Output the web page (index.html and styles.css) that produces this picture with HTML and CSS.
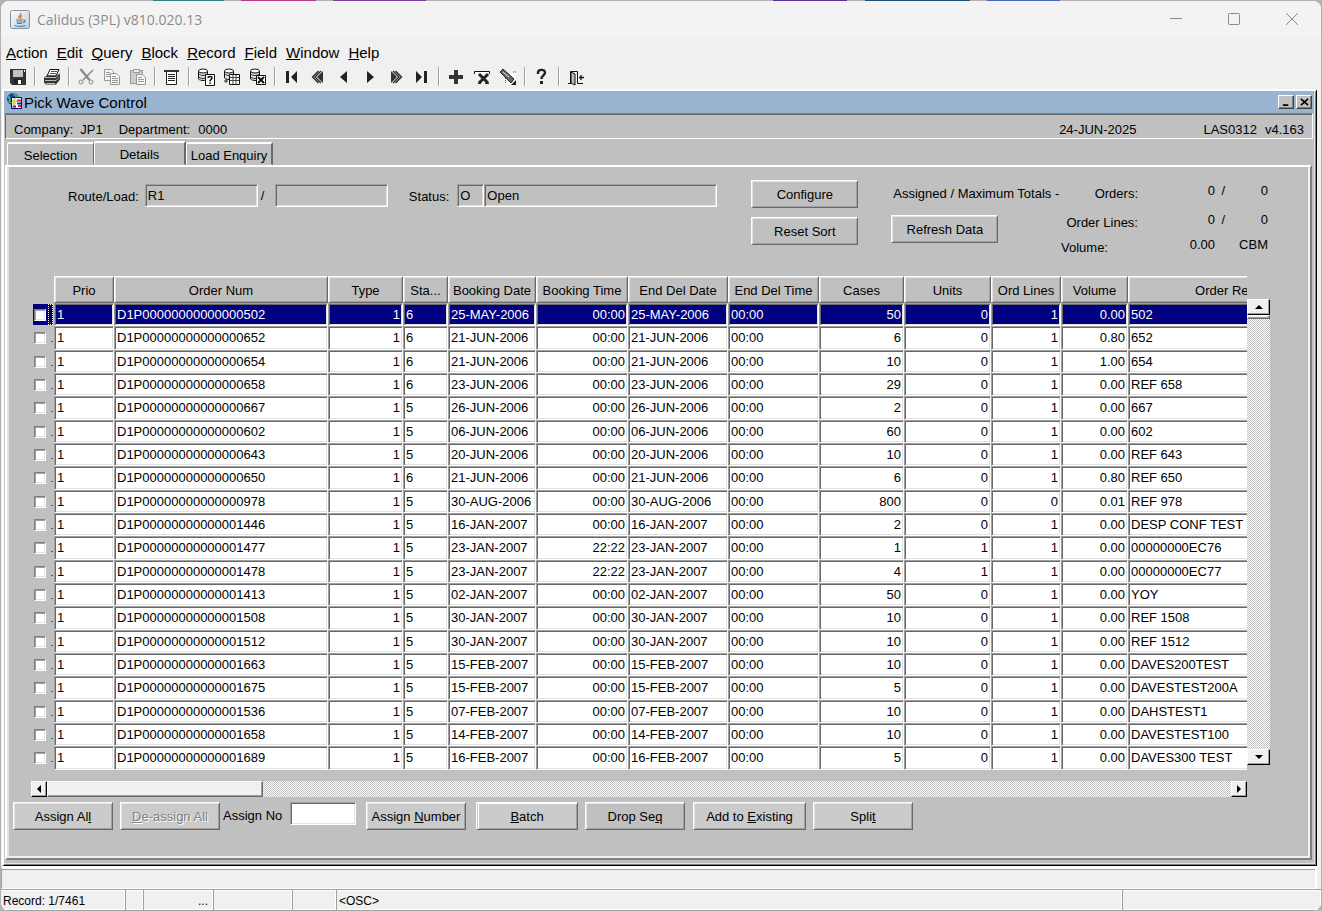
FILE: index.html
```
<!DOCTYPE html>
<html lang="en">
<head>
<meta charset="utf-8">
<title>Calidus (3PL) v810.020.13</title>
<link rel="stylesheet" href="styles.css">
</head>
<body>
<div class="app">
  <header class="titlebar">
    <svg class="java" viewBox="0 0 20 20"><defs><linearGradient id="g" x1="0" y1="0" x2="1" y2="1"><stop offset="0" stop-color="#fff"/><stop offset="1" stop-color="#b9cbd8"/></linearGradient></defs><rect x=".5" y=".5" width="19" height="18" rx="2" fill="url(#g)" stroke="#7f93a3"/><path d="M10.500 3c1.500 2-3 3-1.500 5.500M12 5.500c-2 1.200-2 2-1 3.500" fill="none" stroke="#e5803c" stroke-width="1.500"/><path d="M6 10h7M6.500 12h6M7 13.500h5M13.500 10c2.500 0 1.500 2.500-.5 2.500M4.500 15.500c3 1 8 1 11 0" fill="none" stroke="#4f7fa5" stroke-width="1.200"/></svg>
    <h1>Calidus (3PL) v810.020.13</h1>
    <div class="caption">
      <button aria-label="Minimize"><svg viewBox="0 0 12 12"><path d="M0 5.500h12"/></svg></button>
      <button aria-label="Maximize"><svg viewBox="0 0 12 12"><rect x=".5" y=".5" width="11" height="11" rx="1"/></svg></button>
      <button aria-label="Close"><svg viewBox="0 0 12 12"><path d="M0 0l12 12M12 0L0 12"/></svg></button>
    </div>
  </header>

  <nav class="menubar">
    <button><u>A</u>ction</button><button><u>E</u>dit</button><button><u>Q</u>uery</button><button><u>B</u>lock</button><button><u>R</u>ecord</button><button><u>F</u>ield</button><button><u>W</u>indow</button><button><u>H</u>elp</button>
  </nav>

  <div class="toolbar">
    <button aria-label="Save"><svg viewBox="0 0 18 18"><path d="M1 1h16v16H3l-2-2z" fill="#333"/><path d="M4 2h10v7H4z" fill="#c4c4c4"/><path d="M5 11h8v5H5z" fill="#222"/><path d="M9 12h3v4H9z" fill="#fff"/><path d="M15 2h1v2h-1z" fill="#fff"/></svg></button>
    <i></i>
    <button aria-label="Print"><svg viewBox="0 0 18 18"><path d="M7 1.500h9L13 8H4z" fill="#fff" stroke="#111"/><path d="M8 3.500h6M7 5.500h6" stroke="#555"/><path d="M4 7.500h9l4-2v6l-4 5H3l-2-2v-5z" fill="#333"/><path d="M2 9.500h11l3-3M2 12.500h11l3-3M3 15.500h9" fill="none" stroke="#bbb"/></svg></button>
    <i></i>
    <button aria-label="Cut"><svg viewBox="0 0 18 18" fill="none" stroke="#888"><path d="M3 1l9 11M4 1l9 11M16 2L6 12" stroke-width="1.500"/><circle cx="4" cy="14" r="2"/><circle cx="14" cy="14" r="2"/></svg></button>
    <button aria-label="Copy"><svg viewBox="0 0 18 18" fill="#f4f4f4" stroke="#999"><path d="M1.500 1.500h7l2 2v9h-9z"/><path d="M3 4.500h4M3 6.500h4M3 8.500h4"/><path d="M7.500 5.500h6l3 3v8h-9z"/><path d="M9 8.500h4M9 10.500h6M9 12.500h6M9 14.500h6"/></svg></button>
    <button aria-label="Paste"><svg viewBox="0 0 18 18" fill="#ccc" stroke="#999"><path d="M1.500 2.500h12v13h-12z"/><path d="M4.500 1.500h6v3h-6z" fill="#eee"/><path d="M7.500 6.500h6l3 3v7h-9z" fill="#f4f4f4"/><path d="M9 9.500h4M9 11.500h6M9 13.500h6"/></svg></button>
    <i></i>
    <button aria-label="List of values"><svg viewBox="0 0 18 18"><path d="M1 2h15v2H1z" fill="#333"/><path d="M3.500 4v12.500h10V4" fill="#fff" stroke="#222"/><path d="M5 6.500h7M5 8.500h7M5 10.500h7M5 12.500h7" stroke="#222"/></svg></button>
    <i></i>
    <button aria-label="Enter query"><svg viewBox="0 0 18 18"><path d="M1.500 3v8c2 2 7 2 9 0V3" fill="#ddd" stroke="#111"/><ellipse cx="6" cy="3" rx="4.500" ry="2" fill="#fff" stroke="#111"/><path d="M2 6c2 2 6 2 8 0M2 9c2 2 6 2 8 0" fill="none" stroke="#333"/><path d="M8.500 6.500h9v11h-9z" fill="#fff" stroke="#111"/><path d="M11 10c0-2 4-2 4 0 0 1.500-2 1.300-2 3.500M13 14.500v1.500" fill="none" stroke="#111" stroke-width="1.500"/></svg></button>
    <button aria-label="Execute query"><svg viewBox="0 0 18 18"><path d="M1.500 3v7c2 2 7 2 9 0V3" fill="#ddd" stroke="#111"/><ellipse cx="6" cy="3" rx="4.500" ry="2" fill="#fff" stroke="#111"/><path d="M2 6c2 2 6 2 8 0" fill="none" stroke="#333"/><path d="M6.500 6.500h10v10h-10z" fill="#fff" stroke="#111"/><path d="M7 9.500h9M7 12.500h9M10 7v9M13 7v9" stroke="#444"/><path d="M1 13h4M3 11v4" stroke="#333"/></svg></button>
    <button aria-label="Cancel query"><svg viewBox="0 0 18 18"><path d="M1.500 3v8c2 2 7 2 9 0V3" fill="#ddd" stroke="#111"/><ellipse cx="6" cy="3" rx="4.500" ry="2" fill="#fff" stroke="#111"/><path d="M2 6c2 2 6 2 8 0M2 9c2 2 6 2 8 0" fill="none" stroke="#333"/><path d="M7.500 7.500h9v9h-9z" fill="#fff" stroke="#111"/><path d="M9 9l6 6M15 9l-6 6" stroke="#111" stroke-width="2"/></svg></button>
    <i></i>
    <button aria-label="First record"><svg viewBox="0 0 18 18"><path d="M3 3h3v12H3zM14 3v12l-6-6z" fill="#222"/></svg></button>
    <button aria-label="Previous block"><svg viewBox="0 0 18 18"><path d="M14 3v12L8 9z" fill="#333"/><path d="M9.500 3l-6 6 6 6M12 3L6 9l6 6" fill="none" stroke="#222" stroke-width="1.300"/></svg></button>
    <button aria-label="Previous record"><svg viewBox="0 0 18 18"><path d="M12 3v12L5 9z" fill="#222"/></svg></button>
    <button aria-label="Next record"><svg viewBox="0 0 18 18"><path d="M6 3v12l7-6z" fill="#222"/></svg></button>
    <button aria-label="Next block"><svg viewBox="0 0 18 18"><path d="M4 3v12l6-6z" fill="#333"/><path d="M8.500 3l6 6-6 6M6 3l6 6-6 6" fill="none" stroke="#222" stroke-width="1.300"/></svg></button>
    <button aria-label="Last record"><svg viewBox="0 0 18 18"><path d="M3 3v12l6-6zM11 3h3v12h-3z" fill="#222"/></svg></button>
    <i></i>
    <button aria-label="Insert record"><svg viewBox="0 0 18 18"><path d="M2 9h14M9 2v14" stroke="#333" stroke-width="4"/></svg></button>
    <button aria-label="Remove record"><svg viewBox="0 0 18 18"><path d="M1.500 6V3.500h15V6" fill="#fff" stroke="#111"/><path d="M6 6l9 9M15 6l-9 9" stroke="#222" stroke-width="3"/><path d="M5 15.500h3M12 15.500h4" stroke="#222"/></svg></button>
    <button aria-label="Clear record"><svg viewBox="0 0 18 18"><path d="M6 5h11v11H6z" fill="#fff"/><path d="M6.500 8v8M14 4h3" stroke="#555" stroke-dasharray="1 1"/><path d="M1 4l3-3 11 10-3 4z" fill="#666" stroke="#222"/><path d="M4 4l6 5" stroke="#ddd"/><path d="M17 12v5h-5z" fill="#222"/></svg></button>
    <i></i>
    <button aria-label="Help"><svg viewBox="0 0 18 18"><path d="M5 6V4.500c0-3.500 7-3.500 7 0 0 3-3.500 3-3.500 6.500" fill="none" stroke="#222" stroke-width="2.400"/><path d="M7 13h3v3H7z" fill="#222"/></svg></button>
    <i></i>
    <button aria-label="Exit"><svg viewBox="0 0 18 18"><path d="M1 15.500h3M3.500 15V3.500h7v12H16" fill="none" stroke="#111"/><path d="M4 4l4 2v11l-4-2z" fill="#bbb" stroke="#111"/><path d="M12 9.500h5M14 7v5" stroke="#111" stroke-width="1.300"/></svg></button>
  </div>

  <main class="mdi">
    <div class="mdi-title">
      <svg viewBox="0 0 18 18"><circle cx="7" cy="6" r="6" fill="#12508c"/><path d="M2 3c3 3 2 5 1 7M8 0c0 3 4 3 5 4" stroke="#3fae8c" stroke-width="2" fill="none"/><path d="M5.500 4.500h10v11h-10z" fill="#fff" stroke="#000080"/><path d="M11 7.500h4" stroke="#d22" stroke-width="2"/><path d="M11 10.500h4M7 13.500h3" stroke="#22c" stroke-width="2"/><path d="M12 13h3" stroke="#d22" stroke-width="2"/><path d="M10 4l-5 6h3l-2 5 5-7H8z" fill="#fe0" stroke="#875" stroke-width=".4"/></svg>
      <h2>Pick Wave Control</h2>
      <button class="mdi-btn" aria-label="Minimize form"><svg viewBox="0 0 10 10"><path d="M1 8h6" stroke-width="2"/></svg></button>
      <button class="mdi-btn" aria-label="Close form"><svg viewBox="0 0 10 10"><path d="M1 1l8 7M9 1L1 8" stroke-width="1.800"/></svg></button>
    </div>
    <div class="info">
      <span>Company:</span><span class="company">JP1</span><span class="dept">Department:</span><span>0000</span>
      <span class="date">24-JUN-2025</span><span class="form-id">LAS0312</span><span>v4.163</span>
    </div>
    <div class="tabs" role="tablist">
      <button class="tab" role="tab">Selection</button><button class="tab on" role="tab" aria-selected="true">Details</button><button class="tab" role="tab">Load Enquiry</button>
    </div>

    <section class="pane">
      <div class="query">
        <div class="fields">
          <label for="route">Route/Load:</label>
          <input class="box route" id="route" value="R1" readonly>
          <label class="slash" for="load">/</label>
          <input class="box route" id="load" readonly>
          <label class="status" for="status">Status:</label>
          <input class="box code" id="status" value="O" readonly>
          <input class="box name" aria-label="Status name" value="Open" readonly>
        </div>
        <div class="stack">
          <button class="btn flat">Configure</button>
          <button class="btn flat">Reset Sort</button>
        </div>
        <div class="totals-head">
          <span>Assigned / Maximum Totals -</span>
          <button class="btn flat">Refresh Data</button>
        </div>
        <dl class="totals">
          <div><dt>Orders:</dt><dd class="a">0</dd><dd class="s">/</dd><dd class="m">0</dd></div>
          <div><dt>Order Lines:</dt><dd class="a">0</dd><dd class="s">/</dd><dd class="m">0</dd></div>
          <div class="vol"><dt>Volume:</dt><dd class="a">0.00</dd><dd class="s"></dd><dd class="m">CBM</dd></div>
        </dl>
      </div>

      <div class="grid">
        <div class="view">
          <table>
            <colgroup><col class="w-sel"><col class="w-prio"><col class="w-num"><col class="w-type"><col class="w-sta"><col class="w-bd"><col class="w-bt"><col class="w-ed"><col class="w-et"><col class="w-cases"><col class="w-units"><col class="w-lines"><col class="w-vol"><col class="w-ref"></colgroup>
            <thead><tr><td></td><th>Prio</th><th>Order Num</th><th>Type</th><th>Sta...</th><th>Booking Date</th><th>Booking Time</th><th>End Del Date</th><th>End Del Time</th><th>Cases</th><th>Units</th><th>Ord Lines</th><th>Volume</th><th>Order Reference</th></tr></thead>
            <tbody>
            <tr class="current"><td><input type="checkbox" aria-label="Select 502"><b></b></td><td>1</td><td>D1P00000000000000502</td><td>1</td><td>6</td><td>25-MAY-2006</td><td>00:00</td><td>25-MAY-2006</td><td>00:00</td><td>50</td><td>0</td><td>1</td><td>0.00</td><td>502</td></tr>
            <tr><td><input type="checkbox" aria-label="Select 652"><b></b></td><td>1</td><td>D1P00000000000000652</td><td>1</td><td>6</td><td>21-JUN-2006</td><td>00:00</td><td>21-JUN-2006</td><td>00:00</td><td>6</td><td>0</td><td>1</td><td>0.80</td><td>652</td></tr>
            <tr><td><input type="checkbox" aria-label="Select 654"><b></b></td><td>1</td><td>D1P00000000000000654</td><td>1</td><td>6</td><td>21-JUN-2006</td><td>00:00</td><td>21-JUN-2006</td><td>00:00</td><td>10</td><td>0</td><td>1</td><td>1.00</td><td>654</td></tr>
            <tr><td><input type="checkbox" aria-label="Select 658"><b></b></td><td>1</td><td>D1P00000000000000658</td><td>1</td><td>6</td><td>23-JUN-2006</td><td>00:00</td><td>23-JUN-2006</td><td>00:00</td><td>29</td><td>0</td><td>1</td><td>0.00</td><td>REF 658</td></tr>
            <tr><td><input type="checkbox" aria-label="Select 667"><b></b></td><td>1</td><td>D1P00000000000000667</td><td>1</td><td>5</td><td>26-JUN-2006</td><td>00:00</td><td>26-JUN-2006</td><td>00:00</td><td>2</td><td>0</td><td>1</td><td>0.00</td><td>667</td></tr>
            <tr><td><input type="checkbox" aria-label="Select 602"><b></b></td><td>1</td><td>D1P00000000000000602</td><td>1</td><td>5</td><td>06-JUN-2006</td><td>00:00</td><td>06-JUN-2006</td><td>00:00</td><td>60</td><td>0</td><td>1</td><td>0.00</td><td>602</td></tr>
            <tr><td><input type="checkbox" aria-label="Select 643"><b></b></td><td>1</td><td>D1P00000000000000643</td><td>1</td><td>5</td><td>20-JUN-2006</td><td>00:00</td><td>20-JUN-2006</td><td>00:00</td><td>10</td><td>0</td><td>1</td><td>0.00</td><td>REF 643</td></tr>
            <tr><td><input type="checkbox" aria-label="Select 650"><b></b></td><td>1</td><td>D1P00000000000000650</td><td>1</td><td>6</td><td>21-JUN-2006</td><td>00:00</td><td>21-JUN-2006</td><td>00:00</td><td>6</td><td>0</td><td>1</td><td>0.80</td><td>REF 650</td></tr>
            <tr><td><input type="checkbox" aria-label="Select 978"><b></b></td><td>1</td><td>D1P00000000000000978</td><td>1</td><td>5</td><td>30-AUG-2006</td><td>00:00</td><td>30-AUG-2006</td><td>00:00</td><td>800</td><td>0</td><td>0</td><td>0.01</td><td>REF 978</td></tr>
            <tr><td><input type="checkbox" aria-label="Select 1446"><b></b></td><td>1</td><td>D1P00000000000001446</td><td>1</td><td>5</td><td>16-JAN-2007</td><td>00:00</td><td>16-JAN-2007</td><td>00:00</td><td>2</td><td>0</td><td>1</td><td>0.00</td><td>DESP CONF TEST</td></tr>
            <tr><td><input type="checkbox" aria-label="Select 1477"><b></b></td><td>1</td><td>D1P00000000000001477</td><td>1</td><td>5</td><td>23-JAN-2007</td><td>22:22</td><td>23-JAN-2007</td><td>00:00</td><td>1</td><td>1</td><td>1</td><td>0.00</td><td>00000000EC76</td></tr>
            <tr><td><input type="checkbox" aria-label="Select 1478"><b></b></td><td>1</td><td>D1P00000000000001478</td><td>1</td><td>5</td><td>23-JAN-2007</td><td>22:22</td><td>23-JAN-2007</td><td>00:00</td><td>4</td><td>1</td><td>1</td><td>0.00</td><td>00000000EC77</td></tr>
            <tr><td><input type="checkbox" aria-label="Select 1413"><b></b></td><td>1</td><td>D1P00000000000001413</td><td>1</td><td>5</td><td>02-JAN-2007</td><td>00:00</td><td>02-JAN-2007</td><td>00:00</td><td>50</td><td>0</td><td>1</td><td>0.00</td><td>YOY</td></tr>
            <tr><td><input type="checkbox" aria-label="Select 1508"><b></b></td><td>1</td><td>D1P00000000000001508</td><td>1</td><td>5</td><td>30-JAN-2007</td><td>00:00</td><td>30-JAN-2007</td><td>00:00</td><td>10</td><td>0</td><td>1</td><td>0.00</td><td>REF 1508</td></tr>
            <tr><td><input type="checkbox" aria-label="Select 1512"><b></b></td><td>1</td><td>D1P00000000000001512</td><td>1</td><td>5</td><td>30-JAN-2007</td><td>00:00</td><td>30-JAN-2007</td><td>00:00</td><td>10</td><td>0</td><td>1</td><td>0.00</td><td>REF 1512</td></tr>
            <tr><td><input type="checkbox" aria-label="Select 1663"><b></b></td><td>1</td><td>D1P00000000000001663</td><td>1</td><td>5</td><td>15-FEB-2007</td><td>00:00</td><td>15-FEB-2007</td><td>00:00</td><td>10</td><td>0</td><td>1</td><td>0.00</td><td>DAVES200TEST</td></tr>
            <tr><td><input type="checkbox" aria-label="Select 1675"><b></b></td><td>1</td><td>D1P00000000000001675</td><td>1</td><td>5</td><td>15-FEB-2007</td><td>00:00</td><td>15-FEB-2007</td><td>00:00</td><td>5</td><td>0</td><td>1</td><td>0.00</td><td>DAVESTEST200A</td></tr>
            <tr><td><input type="checkbox" aria-label="Select 1536"><b></b></td><td>1</td><td>D1P00000000000001536</td><td>1</td><td>5</td><td>07-FEB-2007</td><td>00:00</td><td>07-FEB-2007</td><td>00:00</td><td>10</td><td>0</td><td>1</td><td>0.00</td><td>DAHSTEST1</td></tr>
            <tr><td><input type="checkbox" aria-label="Select 1658"><b></b></td><td>1</td><td>D1P00000000000001658</td><td>1</td><td>5</td><td>14-FEB-2007</td><td>00:00</td><td>14-FEB-2007</td><td>00:00</td><td>10</td><td>0</td><td>1</td><td>0.00</td><td>DAVESTEST100</td></tr>
            <tr><td><input type="checkbox" aria-label="Select 1689"><b></b></td><td>1</td><td>D1P00000000000001689</td><td>1</td><td>5</td><td>16-FEB-2007</td><td>00:00</td><td>16-FEB-2007</td><td>00:00</td><td>5</td><td>0</td><td>1</td><td>0.00</td><td>DAVES300 TEST</td></tr>
            </tbody>
          </table>
        </div>
        <div class="vscroll">
          <button aria-label="Scroll up"><svg viewBox="0 0 8 4"><path d="M0 4l4-4 4 4z"/></svg></button>
          <span class="thumb"></span>
          <button class="end" aria-label="Scroll down"><svg viewBox="0 0 8 4"><path d="M0 0h8L4 4z"/></svg></button>
        </div>
      </div>
      <div class="hscroll">
        <button aria-label="Scroll left"><svg viewBox="0 0 4 8"><path d="M4 0v8L0 4z"/></svg></button>
        <span class="thumb"></span>
        <button class="end" aria-label="Scroll right"><svg viewBox="0 0 4 8"><path d="M0 0v8l4-4z"/></svg></button>
      </div>

      <div class="actions">
        <button class="btn">Assign Al<u>l</u></button>
        <button class="btn" disabled><u>D</u>e-assign All</button>
        <label for="assign">Assign No</label>
        <input class="box assign" id="assign">
        <button class="btn">Assign <u>N</u>umber</button>
        <button class="btn batch"><u>B</u>atch</button>
        <button class="btn flat">Drop Se<u>q</u></button>
        <button class="btn wide">Add to <u>E</u>xisting</button>
        <button class="btn">Spli<u>t</u></button>
      </div>
    </section>
  </main>

  <div class="message"></div>
  <footer class="statusbar">
    <span class="rec">Record: 1/7461</span><span class="s1"></span><span class="s2">...</span><span class="s3"></span><span class="s4"></span><span class="osc">&lt;OSC&gt;</span><span class="s6"></span>
  </footer>
</div>
</body>
</html>
```
FILE: styles.css
```
* { box-sizing: border-box; }
body {
  margin: 0;
  min-height: 100vh;
  padding: 1px 1px 0;
  display: flex;
  background: linear-gradient(90deg, #b4b0b4 153px, #2b7f86 153px 224px, #b4b0b4 224px 241px, #b8358a 241px 316px, #b4b0b4 316px 333px, #7b3fa0 333px 426px, #b4b0b4 426px 773px, #5b2f9c 773px 847px, #b4b0b4 847px 865px, #1f4e79 865px 970px, #b4b0b4 970px 987px, #3f66b8 987px 1060px, #b4b0b4 1060px);
  font: 13px/16px "Liberation Sans", Arial, sans-serif;
  color: #000;
}
button, input { font: inherit; color: inherit; margin: 0; padding: 0; border: 0; border-radius: 0; }
button { background: none; white-space: nowrap; }
h1, h2, dl, dd { margin: 0; font-weight: normal; }
u { text-decoration: underline; text-underline-offset: 1px; text-decoration-thickness: 1px; }

.app { flex: 1; min-width: 0; display: flex; flex-direction: column; background: #f0f0f0; border-radius: 8px; overflow: hidden; }

.titlebar { display: flex; align-items: center; height: 37px; padding: 0 0 0 9px; background: #f3f3f3; }
.java { width: 20px; height: 20px; }
.titlebar h1 { flex: 1; margin-left: 7px; font: 14px/20px "Open Sans", sans-serif; color: #8c8c8c; }
.caption { display: flex; }
.caption button { width: 58px; height: 36px; padding-bottom: 1px; display: grid; place-items: center; }
.caption svg { width: 12px; height: 12px; fill: none; stroke: #8a8a8a; overflow: visible; }

.menubar { display: flex; gap: 9px; align-items: center; height: 28px; padding: 2px 5px 0; font-size: 15px; }

.toolbar { display: flex; align-items: center; height: 23px; padding: 0 0 2px 4px; }
.toolbar button { width: 26px; height: 20px; display: grid; place-items: center; }
.toolbar svg { width: 18px; height: 18px; }
.toolbar i { width: 2px; height: 19px; margin: 0 3px; border-left: 1px solid #a0a0a0; border-right: 1px solid #fff; }

.mdi {
  flex: 1; display: flex; flex-direction: column;
  margin: 0 4px 0 1px;
  padding-bottom: 5px;
  background: #c0c0c0;
  border: 2px solid #fff;
  border-right: 1px solid #000;
  border-bottom: 1px solid #000;
  box-shadow: inset -1px -1px #808080, inset -2px -2px #e3e3e3;
}
.mdi-title { display: flex; align-items: center; height: 22px; margin-right: 2px; padding: 0 2px; background: #99b4d1; }
.mdi-title > svg { width: 18px; height: 18px; }
.mdi-title h2 { flex: 1; font-size: 15px; line-height: 20px; margin-top: 2px; }
.mdi-btn { width: 16px; height: 14px; display: grid; place-items: center; background: #c0c0c0; border: 1px solid; border-color: #fff #404040 #404040 #fff; box-shadow: inset -1px -1px #808080; }
.mdi-btn + .mdi-btn { margin-left: 2px; }
.mdi-btn svg { width: 9px; height: 9px; stroke: #000; }
.info { display: flex; align-items: center; height: 26px; margin: 0 3px 0 1px; padding: 8px 8px 0 8px; border: 1px solid; border-color: #808080 #fff #fff #696969; box-shadow: inset 0 1px #696969; }
.company { margin-left: 7px; }
.dept { margin: 0 8px 0 16px; }
.date { margin-left: auto; }
.form-id { margin: 0 8px 0 67px; }

.tabs { display: flex; align-items: flex-end; margin: 2px 0 0 3px; height: 24px; }
.tab { width: 87px; height: 23px; padding-top: 3px; border: 1px solid; border-color: #fff #696969 transparent #fff; border-top-width: 2px; border-radius: 2px 2px 0 0; background: #c0c0c0; }
.tab:last-child { border-right-width: 2px; }
.tab.on { width: 92px; height: 24px; padding-top: 2px; border-right-width: 2px; }

.pane {
  flex: 1; display: flex; flex-direction: column;
  margin: 0 4px 0 1px;
  padding: 13px 0 28px 4px;
  border: 2px solid #fff;
  border-right-color: #808080;
  border-bottom-color: #808080;
  box-shadow: inset 2px 0 #e3e3e3, inset -2px -2px #f0f0f0;
}

.box { height: 23px; padding: 0 2px; background: #c0c0c0; border: 1px solid; border-color: #a0a0a0 #fff #fff #a0a0a0; box-shadow: inset 1px 1px #696969, inset -1px -1px #e3e3e3; outline: 0; }
.btn { min-width: 100px; height: 28px; padding: 2px 4px 0; background: #cbcbcb; border: 1px solid; border-color: #fff #696969 #696969 #fff; box-shadow: inset 1px 1px #e3e3e3, inset -1px -1px #a0a0a0; }
.btn.flat { background: #c0c0c0; }
.btn:disabled { color: #808080; text-shadow: 1px 1px #fff; }

.query { display: flex; align-items: flex-start; height: 96px; padding: 0 42px 0 57px; }
.fields { display: flex; align-items: center; margin-top: 4px; }
.fields label { padding-top: 3px; }
.fields .slash { width: 17px; padding: 0 0 0 3px; }
.route { width: 113px; margin-left: 6px; }
.slash + .route { margin-left: 0; }
.status { margin-left: 21px; }
.code { width: 27px; margin-left: 8px; }
.name { width: 233px; }
.stack { display: grid; gap: 9px; margin-left: 34px; }
.stack .btn, .totals-head .btn { width: 107px; }
.totals-head { display: grid; gap: 13px; margin: 6px 0 0 33px; white-space: nowrap; }
.totals-head span { padding-left: 2px; }
.totals { display: grid; gap: 10px; margin: 3px 0 0 auto; }
.totals div { display: flex; line-height: 16px; }
.totals dt { width: 77px; padding-top: 3px; text-align: right; }
.totals .a { width: 77px; }
.totals .s { width: 10px; }
.totals .m { width: 43px; }
.totals dd { text-align: right; }
.totals .vol { margin-top: -4px; }
.totals .vol dt { text-align: left; }

.grid { display: flex; padding: 0 40px 0 22px; }
.view { flex: 1; min-width: 0; overflow: hidden; }
table { table-layout: fixed; width: 1326px; border-collapse: separate; border-spacing: 0; }
.w-sel { width: 21px; } .w-prio { width: 60px; } .w-num { width: 214px; } .w-type { width: 75px; } .w-sta { width: 45px; }
.w-bd { width: 88px; } .w-bt { width: 92px; } .w-ed { width: 100px; } .w-et { width: 91px; } .w-cases { width: 85px; }
.w-units { width: 87px; } .w-lines { width: 70px; } .w-vol { width: 67px; } .w-ref { width: 231px; }
th { height: 27px; padding: 2px 0 0; font-weight: normal; border: 1px solid; border-color: #fff #696969 #696969 #fff; box-shadow: inset 1px 1px #e3e3e3, inset -1px -1px #a0a0a0; }
tbody td { height: 23px; padding: 0 2px 0; background: #fff; border: 1px solid; border-color: #a0a0a0 #fff #fff #a0a0a0; box-shadow: inset 1px 1px #696969, inset -1px -1px #e3e3e3; white-space: nowrap; }
tbody tr:nth-child(3n+2) td { height: 24px; }
tbody td:nth-child(4), tbody td:nth-child(7), tbody td:nth-child(n+10):nth-child(-n+13) { text-align: right; }
.current td { background: #000080; color: #fff; }
tbody td:first-child { padding: 0; background: none; border: 0; box-shadow: none; line-height: 0; }
td input { appearance: none; width: 12px; height: 12px; margin-left: 1px; vertical-align: middle; background: #fff; border: 1px solid; border-color: #808080 #fff #fff #808080; box-shadow: inset 1px 1px #a0a0a0, inset -1px -1px #e3e3e3; }
td b { display: inline-block; width: 2px; height: 1px; margin-left: 5px; vertical-align: -1px; background: #406080; }
tbody tr.current td:first-child { background: linear-gradient(#000080, #000080) 0 1px / 16px 21px no-repeat; }
.current b { width: 5px; height: 21px; margin-left: 2px; vertical-align: middle; border: 1px dotted #fff; background: #000080; }

.vscroll, .hscroll { display: flex; background: repeating-conic-gradient(#fff 0 25%, #c0c0c0 0 50%) 0 0 / 2px 2px; }
.vscroll { flex-direction: column; width: 23px; margin: 23px 0 5px; }
.vscroll button, .hscroll button { display: grid; place-items: center; width: 16px; height: 16px; background: #f0f0f0; border: 1px solid; border-color: #fff #000 #000 #fff; box-shadow: inset -1px -1px #a0a0a0; }
.vscroll button { width: 23px; }
.vscroll svg { width: 8px; height: 4px; }
.hscroll svg { width: 4px; height: 8px; }
.thumb { background: #f0f0f0; border: 1px solid; border-color: #fff #696969 #696969 #fff; box-shadow: inset -1px -1px #a0a0a0; }
.vscroll .thumb { height: 4px; }
.hscroll .thumb { width: 216px; }
.vscroll .end { margin-top: auto; }
.hscroll .end { margin-left: auto; }
.hscroll { height: 16px; margin: 11px 63px 0 20px; }

.actions { display: flex; margin: 5px 0 0 2px; }
.actions label { margin: 6px 0 0 3px; width: 67px; }
.actions .btn + .btn { margin-left: 7px; }
.actions .assign { width: 66px; margin-right: 10px; background: #fff; }
.actions .btn.batch { width: 102px; margin-left: 10px; box-shadow: inset 1px 0 #c8c8c8, inset 2px 1px #fff, inset -1px -1px #a0a0a0; }
.actions .btn.wide { width: 113px; margin-left: 8px; }

.message { height: 23px; margin-right: 4px; border: 1px solid; border-width: 3px 2px 1px 1px; border-color: #fff #fff #fff #a0a0a0; box-shadow: inset 0 1px #a0a0a0; }
.statusbar { display: flex; height: 22px; border-top: 1px solid #a0a0a0; border-bottom: 1px solid #a0a0a0; box-shadow: inset 0 1px #fff, inset 0 -1px #fff; }
.statusbar span { padding: 3px 2px 0; border-right: 1px solid #a0a0a0; font-size: 12px; line-height: 16px; box-shadow: inset -1px 0 #fff; }
.rec { width: 125px; }
.s1 { width: 18px; }
.s2 { width: 70px; text-align: right; }
.statusbar .s2 { padding-right: 5px; }
.s3 { width: 79px; }
.s4 { width: 44px; }
.osc { flex: 1; }
.statusbar .s6 { width: 198px; border: 0; }
```
